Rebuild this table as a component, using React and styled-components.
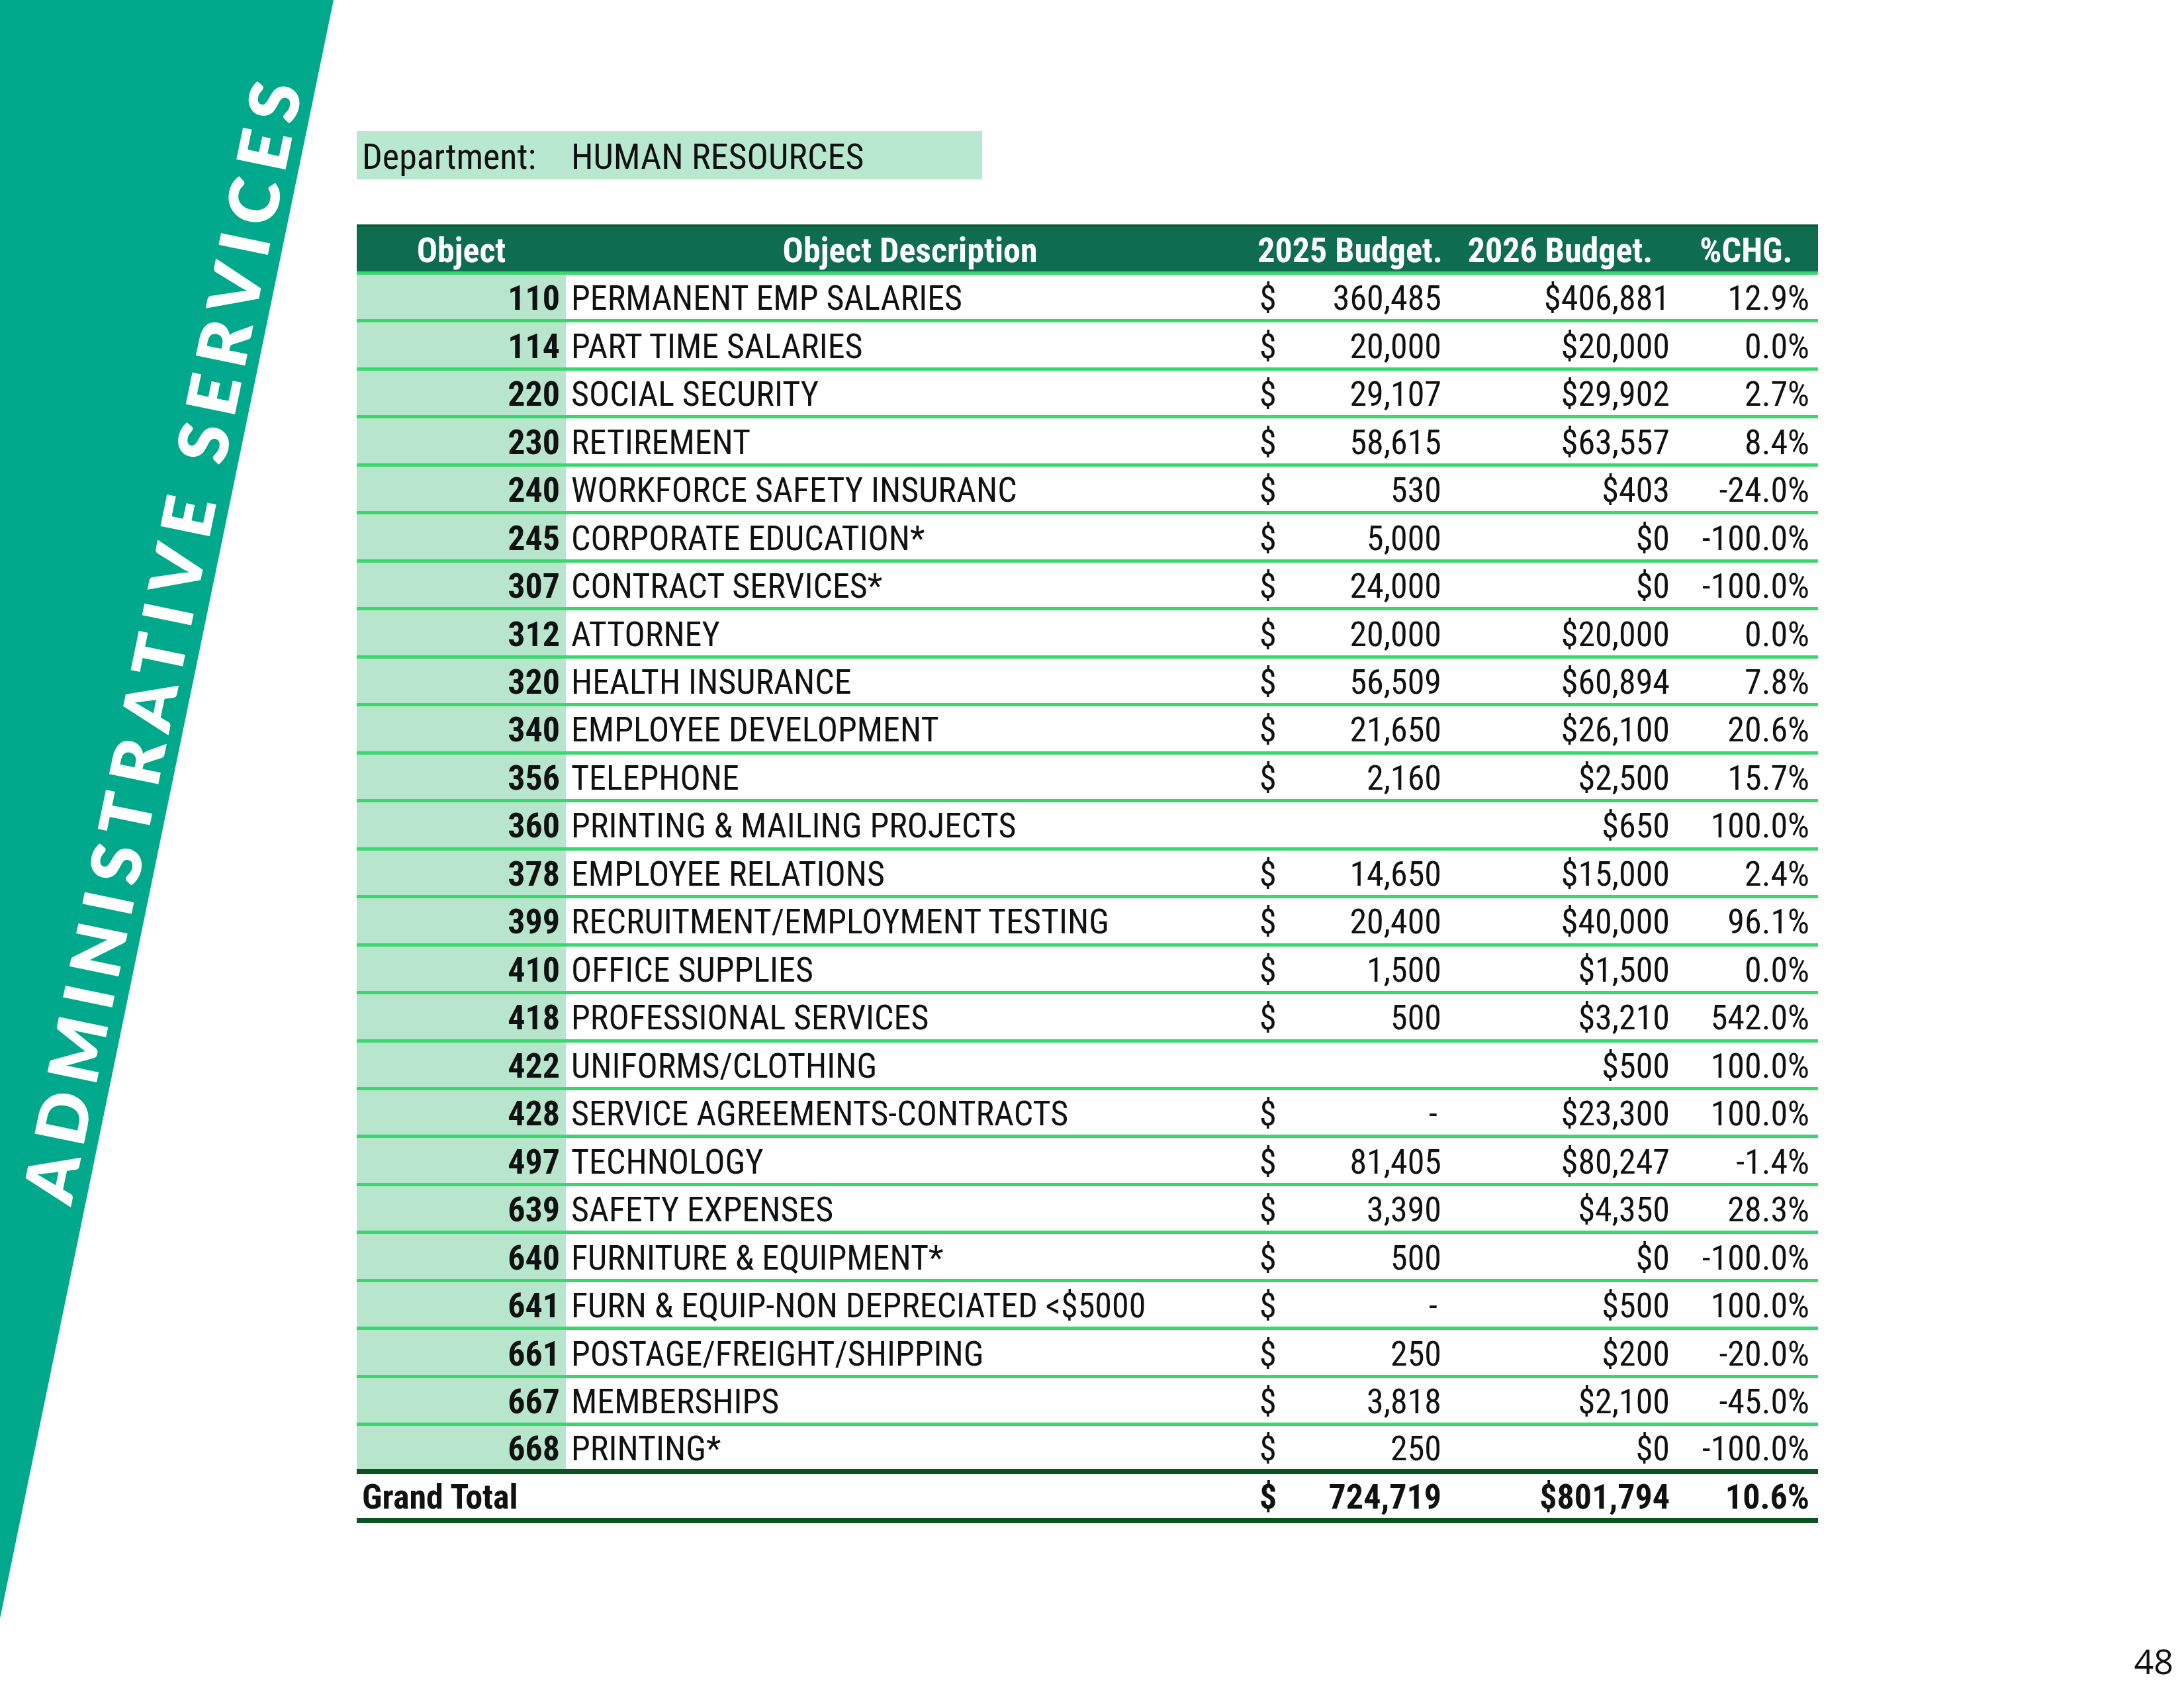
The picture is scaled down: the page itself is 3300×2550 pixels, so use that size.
import React from 'react';
import styled, { createGlobalStyle } from 'styled-components';

const GlobalStyle = createGlobalStyle`
  html, body {
    margin: 0;
    padding: 0;
    background: #ffffff;
  }
  body {
    font-family: 'Roboto Condensed', 'Liberation Sans Narrow', 'Roboto', sans-serif;
    color: #111111;
  }
`;

const Page = styled.div`
  position: relative;
  width: 3300px;
  height: 2550px;
  overflow: hidden;
  background: #ffffff;
  display: flex;
  flex-direction: column;
`;

// slanted teal band on the left edge
const SideBand = styled.div`
  position: absolute;
  left: 0;
  top: 0;
  width: 504px;
  height: 2445px;
  background: #00a98b;
  clip-path: polygon(0 0, 100% 0, 0 100%);
`;

const BandTitle = styled.div`
  position: absolute;
  left: 244px;
  top: 962px;
  transform: translate(-50%, -50%) rotate(-78.3deg);
  white-space: nowrap;
  font-family: Lato, 'Open Sans', sans-serif;
  font-weight: 800;
  font-size: 104px;
  letter-spacing: 0.15em;
  color: #ffffff;
`;

const Content = styled.main`
  padding: 198px 0 0 539px;
`;

const DeptBar = styled.div`
  width: 945px;
  height: 73px;
  box-sizing: border-box;
  padding: 3px 0 0 8px;
  display: flex;
  align-items: center;
  background: #b9e8d0;
  font-size: 54px;
`;

const DeptLabel = styled.span`
  width: 316px;
`;

const Table = styled.div`
  margin-top: 68px;
  width: 2208px;
`;

const COLS = '316px 1040px 290px 345px 217px';

const HeaderRow = styled.div`
  display: grid;
  grid-template-columns: ${COLS};
  height: 76px;
  box-sizing: border-box;
  padding-top: 4px;
  background: #0f6d4f;
  border-top: 4px solid #0a5a3c;
  border-bottom: 5px solid #38d86c;
  color: #ffffff;
  font-weight: 700;
  font-size: 52px;
`;

const HeadCell = styled.div`
  display: flex;
  align-items: center;
  justify-content: center;
  white-space: nowrap;
`;

const Row = styled.div`
  display: grid;
  grid-template-columns: ${COLS};
  height: ${({ $total }) => ($total ? '74px' : '72.48px')};
  box-sizing: border-box;
  border-bottom: ${({ $last, $total }) =>
    $last || $total ? '8px solid #0b5321' : '5px solid #38d86c'};
  font-size: 52px;
  font-weight: ${({ $total }) => ($total ? 700 : 400)};
`;

const ObjectCell = styled.div`
  display: flex;
  align-items: center;
  justify-content: ${({ $total }) => ($total ? 'flex-start' : 'flex-end')};
  padding: ${({ $total }) => ($total ? '4px 0 0 8px' : '4px 9px 0 0')};
  background: ${({ $total }) => ($total ? 'transparent' : '#b8e6cd')};
  font-weight: 700;
  white-space: nowrap;
`;

const DescCell = styled.div`
  display: flex;
  align-items: center;
  padding: 4px 0 0 8px;
  white-space: nowrap;
`;

const MoneyCell = styled.div`
  display: flex;
  align-items: center;
  justify-content: space-between;
  padding: 4px ${({ $dash }) => ($dash ? '13px' : '7px')} 0 8px;
`;

const NumCell = styled.div`
  display: flex;
  align-items: center;
  justify-content: flex-end;
  padding: 4px ${({ $pad }) => $pad}px 0 0;
`;

const Footer = styled.footer`
  margin-top: auto;
  padding: 0 16px 6px 0;
  text-align: right;
  font-family: 'Open Sans', 'Liberation Sans', sans-serif;
  font-size: 52px;
  color: #111111;
`;

const rows = [
  ['110', 'PERMANENT EMP SALARIES', '360,485', '$406,881', '12.9%'],
  ['114', 'PART TIME SALARIES', '20,000', '$20,000', '0.0%'],
  ['220', 'SOCIAL SECURITY', '29,107', '$29,902', '2.7%'],
  ['230', 'RETIREMENT', '58,615', '$63,557', '8.4%'],
  ['240', 'WORKFORCE SAFETY INSURANC', '530', '$403', '-24.0%'],
  ['245', 'CORPORATE EDUCATION*', '5,000', '$0', '-100.0%'],
  ['307', 'CONTRACT SERVICES*', '24,000', '$0', '-100.0%'],
  ['312', 'ATTORNEY', '20,000', '$20,000', '0.0%'],
  ['320', 'HEALTH INSURANCE', '56,509', '$60,894', '7.8%'],
  ['340', 'EMPLOYEE DEVELOPMENT', '21,650', '$26,100', '20.6%'],
  ['356', 'TELEPHONE', '2,160', '$2,500', '15.7%'],
  ['360', 'PRINTING & MAILING PROJECTS', null, '$650', '100.0%'],
  ['378', 'EMPLOYEE RELATIONS', '14,650', '$15,000', '2.4%'],
  ['399', 'RECRUITMENT/EMPLOYMENT TESTING', '20,400', '$40,000', '96.1%'],
  ['410', 'OFFICE SUPPLIES', '1,500', '$1,500', '0.0%'],
  ['418', 'PROFESSIONAL SERVICES', '500', '$3,210', '542.0%'],
  ['422', 'UNIFORMS/CLOTHING', null, '$500', '100.0%'],
  ['428', 'SERVICE AGREEMENTS-CONTRACTS', '-', '$23,300', '100.0%'],
  ['497', 'TECHNOLOGY', '81,405', '$80,247', '-1.4%'],
  ['639', 'SAFETY EXPENSES', '3,390', '$4,350', '28.3%'],
  ['640', 'FURNITURE & EQUIPMENT*', '500', '$0', '-100.0%'],
  ['641', 'FURN & EQUIP-NON DEPRECIATED <$5000', '-', '$500', '100.0%'],
  ['661', 'POSTAGE/FREIGHT/SHIPPING', '250', '$200', '-20.0%'],
  ['667', 'MEMBERSHIPS', '3,818', '$2,100', '-45.0%'],
  ['668', 'PRINTING*', '250', '$0', '-100.0%'],
];

const Money = ({ value }) =>
  value === null ? (
    <MoneyCell />
  ) : (
    <MoneyCell $dash={value === '-'}>
      <span>$</span>
      <span>{value}</span>
    </MoneyCell>
  );

export default function App() {
  return (
    <Page>
      <GlobalStyle />
      <SideBand />
      <BandTitle>ADMINISTRATIVE SERVICES</BandTitle>
      <Content>
        <DeptBar>
          <DeptLabel>Department:</DeptLabel>
          <span>HUMAN RESOURCES</span>
        </DeptBar>
        <Table>
          <HeaderRow>
            <HeadCell>Object</HeadCell>
            <HeadCell>Object Description</HeadCell>
            <HeadCell>2025 Budget.</HeadCell>
            <HeadCell>2026 Budget.</HeadCell>
            <HeadCell>%CHG.</HeadCell>
          </HeaderRow>
          {rows.map(([code, desc, b25, b26, chg], i) => (
            <Row key={code} $last={i === rows.length - 1}>
              <ObjectCell>{code}</ObjectCell>
              <DescCell>{desc}</DescCell>
              <Money value={b25} />
              <NumCell $pad={7}>{b26}</NumCell>
              <NumCell $pad={13}>{chg}</NumCell>
            </Row>
          ))}
          <Row $total>
            <ObjectCell $total>Grand Total</ObjectCell>
            <DescCell />
            <Money value="724,719" />
            <NumCell $pad={7}>$801,794</NumCell>
            <NumCell $pad={13}>10.6%</NumCell>
          </Row>
        </Table>
      </Content>
      <Footer>48</Footer>
    </Page>
  );
}
